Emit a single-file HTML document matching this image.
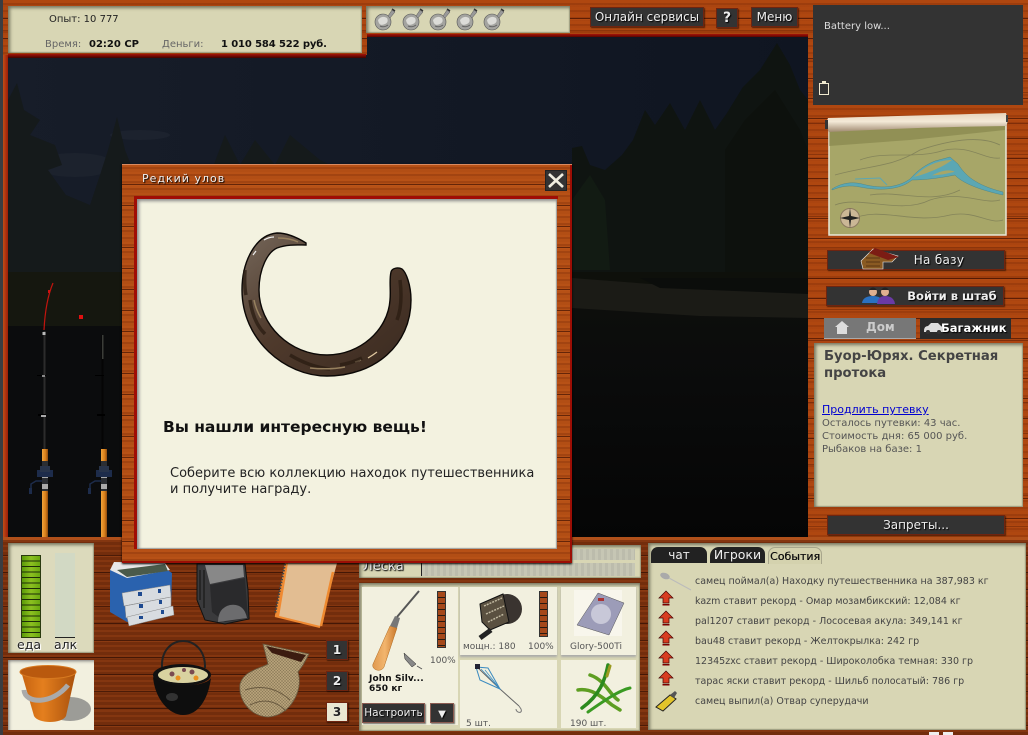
<!DOCTYPE html>
<html><head><meta charset="utf-8"><style>
html,body{margin:0;padding:0;width:1028px;height:735px;overflow:hidden;background:#3a3d42}
body{position:relative;font-family:"DejaVu Sans","Liberation Sans",sans-serif;font-size:10px;color:#222}
div{position:absolute;box-sizing:border-box;white-space:nowrap}
svg{position:absolute;left:0;top:0}
.w{background-color:#a8430f;background-image:repeating-linear-gradient(180deg,rgba(50,10,0,0) 0 18px,rgba(50,10,0,.6) 18px 19px,rgba(255,140,60,.08) 19px 20px),repeating-linear-gradient(180deg,rgba(50,10,0,0) 0 30px,rgba(60,12,0,.3) 30px 31px),repeating-linear-gradient(180deg,rgba(255,120,30,.08) 0 3px,rgba(80,20,0,.12) 3px 5px,rgba(255,120,30,.03) 5px 7px)}
.wd{background-color:#7c320e;background-image:repeating-linear-gradient(180deg,rgba(30,5,0,0) 0 15px,rgba(30,5,0,.55) 15px 16px,rgba(255,130,50,.06) 16px 17px),repeating-linear-gradient(180deg,rgba(255,120,40,.06) 0 2px,rgba(50,10,0,.12) 2px 5px)}
.w2{background-color:#b04c14;background-image:repeating-linear-gradient(180deg,rgba(50,10,0,0) 0 19px,rgba(50,10,0,.6) 19px 20px,rgba(255,140,60,.1) 20px 21px),repeating-linear-gradient(180deg,rgba(255,130,40,.09) 0 2px,rgba(80,20,0,.14) 2px 4px,rgba(255,130,40,.03) 4px 7px)}
.p{background:#d8d6b4;box-shadow:inset 3px 3px 3px -1px #77765f,inset -1px -1px 1px #99987c}
.c{background:#f2f0df}
.b{background:#333;border:1px solid #6e2410;box-shadow:1px 1px 1px rgba(0,0,0,.5);color:#eee;text-align:center;text-shadow:1px 1px 1px #000;font-size:12px}
.t{line-height:12px}
</style></head><body>

<div class="w" style="left:3px;top:0;width:1025px;height:735px"></div>
<div style="left:3px;top:0;width:5px;height:540px;background:linear-gradient(90deg,#c04e18,#9c1c08)"></div>

<!-- scene -->
<svg width="1028" height="735" style="z-index:1">
<defs><linearGradient id="sky" x1="0" y1="0" x2="1" y2="0"><stop offset="0" stop-color="#171d29"/><stop offset="1" stop-color="#0f1521"/></linearGradient>
<linearGradient id="wat" x1="0" y1="0" x2="0" y2="1"><stop offset="0" stop-color="#0e0f0d"/><stop offset=".4" stop-color="#0a0b0b"/><stop offset="1" stop-color="#050505"/></linearGradient>
<linearGradient id="orn" x1="0" y1="0" x2="1" y2="0"><stop offset="0" stop-color="#f2a33a"/><stop offset=".6" stop-color="#d87f1a"/><stop offset="1" stop-color="#8c4a10"/></linearGradient></defs>
<rect x="8" y="37" width="800" height="501" fill="url(#sky)"/>
<ellipse cx="75" cy="165" rx="40" ry="12" fill="#1c222d"/><ellipse cx="140" cy="135" rx="30" ry="5" fill="#1c222e"/>
<rect x="8" y="285" width="800" height="253" fill="url(#wat)"/>
<rect x="8" y="326" width="115" height="212" fill="#0b0c0d"/>
<polygon fill="#151a1b" points="8,100 17,83 24,110 40,120 30,135 55,145 62,165 48,170 66,195 90,205 100,175 108,150 117,117 125,150 135,175 165,200 210,175 225,135 240,165 255,140 275,165 290,135 320,160 340,170 380,200 640,200 640,300 8,300"/>
<polygon fill="#0f1411" points="572,148 582,146 590,165 605,170 622,155 633,140 645,110 655,125 670,103 685,130 700,100 715,130 727,113 743,87 760,70 777,43 790,65 800,90 808,100 808,280 572,280"/>
<polygon fill="#0d110d" points="725,150 745,120 775,90 800,130 808,150 808,280 725,280"/>
<polygon fill="#121b13" points="572,200 590,175 605,200 610,270 572,270"/>
<rect x="8" y="272" width="800" height="12" fill="#0e100b"/>
<polygon fill="#1b1b16" points="572,278 650,284 808,290 808,318 700,316 572,308"/>
<polygon fill="#0b0d0b" points="640,278 808,278 808,294 660,288"/>
<rect x="8" y="272" width="115" height="54" fill="#15170f"/>
<!-- rods -->
<g>
<path d="M44 330 C45 310 48 295 53 283" stroke="#c2140e" stroke-width="1.2" fill="none"/>
<rect x="79" y="315" width="4" height="4" fill="#e01010"/><rect x="48" y="290" width="2" height="3" fill="#d01010"/>
<rect x="43.5" y="331" width="2" height="120" fill="#2c2c2c"/><rect x="42.5" y="332" width="3" height="3" fill="#bbb"/>
<rect x="38" y="414" width="8" height="2" fill="#000"/><rect x="41" y="415" width="5" height="2" fill="#aaa"/>
<rect x="37" y="375" width="9" height="1" fill="#000"/><rect x="42" y="375" width="3" height="2" fill="#888"/>
<rect x="101.500" y="335" width="2" height="116" fill="#050505"/><rect x="102" y="335" width="1.500" height="24" fill="#3b3d38"/>
<rect x="97" y="414" width="8" height="2" fill="#000"/><rect x="95" y="375" width="9" height="1" fill="#000"/>
<rect x="42" y="449" width="6" height="88" fill="url(#orn)"/><rect x="101" y="449" width="6" height="88" fill="url(#orn)"/>
<g id="r1"><rect x="42" y="461" width="6" height="30" fill="#2b2e33"/><rect x="42" y="472" width="6" height="6" fill="#aaa"/><rect x="42" y="484" width="6" height="5" fill="#aaa"/>
<path d="M37 470h16v7h-16z" fill="#1d2c4b"/><path d="M40 466h10v6h-10z" fill="#28344a"/><path d="M42 481h-6l-5 3v8" stroke="#1d2c4b" stroke-width="1.500" fill="none"/><rect x="29" y="488" width="3" height="6" fill="#1d2c4b"/></g>
<g transform="translate(59,0)"><rect x="42" y="461" width="6" height="30" fill="#2b2e33"/><rect x="42" y="472" width="6" height="6" fill="#aaa"/><rect x="42" y="484" width="6" height="5" fill="#aaa"/>
<path d="M37 470h16v7h-16z" fill="#1d2c4b"/><path d="M40 466h10v6h-10z" fill="#28344a"/><path d="M42 481h-6l-5 3v8" stroke="#1d2c4b" stroke-width="1.500" fill="none"/><rect x="29" y="488" width="3" height="6" fill="#1d2c4b"/></g>
</g>
</svg>

<!-- wood edges over scene -->
<div class="w" style="left:362px;top:0;width:446px;height:34px;z-index:2"></div>
<div style="left:362px;top:34px;width:446px;height:3px;background:linear-gradient(#a51208,#5a0500);z-index:2"></div>
<div class="w" style="left:3px;top:0;width:364px;height:55px;z-index:2"></div>
<div style="left:8px;top:54px;width:358px;height:4px;background:linear-gradient(#a51208,#400300);z-index:2"></div>
<div class="w" style="left:808px;top:0;width:220px;height:540px;z-index:2"></div>
<div class="wd" style="left:3px;top:537px;width:1025px;height:198px;z-index:2;border-top:3px solid #b0501a"></div>

<!-- top panels -->
<div class="p" style="left:8px;top:6px;width:354px;height:47px;z-index:3"></div>
<div class="t" style="left:49px;top:14px;z-index:3;color:#222">Опыт: 10 777</div>
<div class="t" style="left:45px;top:39px;z-index:3;color:#666">Время:</div>
<div class="t" style="left:89px;top:39px;z-index:3;font-weight:bold;color:#111">02:20 СР</div>
<div class="t" style="left:162px;top:39px;z-index:3;color:#666">Деньги:</div>
<div class="t" style="left:221px;top:39px;z-index:3;font-weight:bold;color:#111;letter-spacing:-.12px">1 010 584 522 руб.</div>
<div class="p" style="left:366px;top:6px;width:204px;height:27px;z-index:3"></div>
<div class="b" style="left:590px;top:7px;width:114px;height:20px;line-height:18px;z-index:3">Онлайн сервисы</div>
<div class="b" style="left:716px;top:8px;width:22px;height:20px;line-height:18px;font-weight:bold;font-size:14px;z-index:3">?</div>
<div class="b" style="left:751px;top:7px;width:47px;height:20px;line-height:18px;z-index:3">Меню</div>

<!-- battery -->
<div style="left:813px;top:5px;width:210px;height:100px;background:#333;z-index:3"></div>
<div class="t" style="left:824px;top:21px;color:#ddd;z-index:3">Battery low...</div>
<div style="left:819px;top:83px;width:10px;height:12px;border:1px solid #f0ead0;z-index:3"></div>
<div style="left:822px;top:81px;width:4px;height:2px;background:#f0ead0;z-index:3"></div>

<!-- right column buttons -->
<div class="b" style="left:827px;top:250px;width:178px;height:20px;line-height:18px;padding-left:46px;letter-spacing:.3px;z-index:3">На базу</div>
<div class="b" style="left:826px;top:286px;width:178px;height:20px;line-height:18px;padding-left:74px;font-weight:bold;z-index:3;font-size:11.5px">Войти в штаб</div>
<div style="left:824px;top:318px;width:92px;height:21px;background:#777;border-bottom:1px solid #aaa;color:#ccc;font-weight:bold;font-size:12px;line-height:19px;padding-left:42px;z-index:3">Дом</div>
<div style="left:920px;top:318px;width:91px;height:21px;background:#2b2b2b;color:#fff;font-weight:bold;font-size:11.5px;line-height:20px;padding-left:21px;z-index:3;text-shadow:1px 1px 1px #000">Багажник</div>
<div class="p" style="left:814px;top:343px;width:209px;height:164px;z-index:3"></div>
<div style="left:824px;top:348px;font-weight:bold;font-size:13.2px;line-height:17px;color:#444;z-index:3;white-space:normal;width:190px">Буор-Юрях. Секретная протока</div>
<div class="t" style="left:822px;top:404px;font-size:11px;color:#0000d0;text-decoration:underline;z-index:3">Продлить путевку</div>
<div style="left:822px;top:417px;line-height:13px;color:#555;z-index:3">Осталось путевки: 43 час.<br>Стоимость дня: 65 000 руб.<br>Рыбаков на базе: 1</div>
<div class="b" style="left:827px;top:515px;width:178px;height:20px;line-height:18px;z-index:3">Запреты...</div>

<!-- bottom panels -->
<div class="p" style="left:8px;top:543px;width:86px;height:110px;z-index:3;background:#dcdabc"></div>
<div style="left:21px;top:555px;width:20px;height:83px;background:repeating-linear-gradient(180deg,rgba(0,0,0,0) 0 4.700px,#1d2d08 4.700px 5.500px),linear-gradient(90deg,#5a9a08,#8cc020 50%,#6aa810);border:1px solid #2a3a10;z-index:3"></div>
<div style="left:55px;top:553px;width:20px;height:85px;background:#d2d9c4;border-bottom:1px solid #222;z-index:3"></div>
<div style="left:17px;top:638px;font-size:12.500px;line-height:14px;color:#222;text-shadow:0 0 2px #fff,1px 1px 0 #fff;z-index:3">еда</div>
<div style="left:54px;top:638px;font-size:12.500px;line-height:14px;color:#222;text-shadow:0 0 2px #fff,1px 1px 0 #fff;z-index:3">алк</div>
<div class="c" style="left:8px;top:660px;width:86px;height:70px;z-index:3;box-shadow:inset 2px 2px 3px -1px #777"></div>

<div class="b" style="left:326px;top:640px;width:22px;height:20px;line-height:18px;font-weight:bold;z-index:3">1</div>
<div class="b" style="left:326px;top:671px;width:22px;height:20px;line-height:18px;font-weight:bold;z-index:3">2</div>
<div class="b" style="left:326px;top:702px;width:22px;height:20px;line-height:18px;font-weight:bold;background:#e9e7d2;color:#222;text-shadow:0 0 1px #fff;z-index:3">3</div>

<div class="p" style="left:359px;top:545px;width:282px;height:33px;z-index:3"></div>
<div style="left:421px;top:563px;width:214px;height:13px;border-left:1px solid #222;background:repeating-linear-gradient(90deg,#c6c6b4 0 3px,#bcbcac 3px 6px);z-index:3"></div>
<div style="left:421px;top:549px;width:214px;height:11px;background:repeating-linear-gradient(90deg,#c6c6b4 0 3px,#bcbcac 3px 6px);z-index:3"></div>
<div style="left:363px;top:559px;font-size:13px;line-height:15px;color:#eee;text-shadow:1px 1px 1px #000,0 0 2px #000;z-index:3">Леска</div>

<div class="p" style="left:359px;top:583px;width:281px;height:148px;z-index:3"></div>
<div class="c" style="left:362px;top:587px;width:96px;height:138px;z-index:3"></div>
<div class="c" style="left:460px;top:587px;width:97px;height:68px;z-index:3;box-shadow:0 2px 2px #aaa"></div>
<div class="c" style="left:561px;top:587px;width:75px;height:68px;z-index:3;box-shadow:0 2px 2px #aaa"></div>
<div class="c" style="left:460px;top:660px;width:97px;height:68px;z-index:3"></div>
<div class="c" style="left:561px;top:660px;width:75px;height:68px;z-index:3"></div>
<div style="left:437px;top:591px;width:9px;height:57px;background:repeating-linear-gradient(180deg,#a5481a 0 5px,#2a1a10 5px 6px);border:1px solid #333;z-index:4"></div>
<div style="left:539px;top:591px;width:9px;height:46px;background:repeating-linear-gradient(180deg,#a5481a 0 5px,#2a1a10 5px 6px);border:1px solid #333;z-index:4"></div>
<div class="t" style="left:430px;top:655px;font-size:9px;color:#555;z-index:4">100%</div>
<div class="t" style="left:463px;top:641px;font-size:9px;color:#555;z-index:4">мощн.: 180</div>
<div class="t" style="left:528px;top:641px;font-size:9px;color:#555;z-index:4">100%</div>
<div class="t" style="left:570px;top:641px;font-size:9px;color:#555;z-index:4">Glory-500Ti</div>
<div style="left:369px;top:674px;font-size:9px;line-height:10px;font-weight:bold;color:#111;z-index:4;letter-spacing:.1px">John Silv...<br>650 кг</div>
<div class="t" style="left:466px;top:718px;font-size:9px;color:#555;z-index:4">5 шт.</div>
<div class="t" style="left:570px;top:718px;font-size:9px;color:#555;z-index:4">190 шт.</div>
<div class="b" style="left:362px;top:703px;width:63px;height:20px;line-height:18px;font-size:10.500px;border-color:#8a5a50;z-index:4">Настроить</div>
<div class="b" style="left:430px;top:703px;width:24px;height:20px;line-height:18px;border-color:#8a5a50;z-index:4"><span style="font-size:10px">▼</span></div>

<!-- events -->
<div class="p" style="left:648px;top:543px;width:378px;height:187px;z-index:3"></div>
<div style="left:651px;top:547px;width:56px;height:16px;background:#222;border-radius:7px 7px 0 0;color:#eee;font-size:12px;line-height:16px;text-align:center;z-index:4">чат</div>
<div style="left:710px;top:547px;width:55px;height:16px;background:#222;border-radius:9px 7px 0 0;color:#eee;font-size:12.500px;line-height:16px;text-align:center;z-index:4">Игроки</div>
<div style="left:768px;top:547px;width:54px;height:17px;background:#d4d2ae;border:1px solid #a8a68c;border-bottom:0;border-radius:7px 7px 0 0;color:#111;font-size:11px;line-height:17px;text-align:center;z-index:4;text-shadow:.3px 0 0 #111">События</div>
<div style="left:695px;top:572px;font-size:9.500px;line-height:20px;color:#444;z-index:4">самец поймал(а) Находку путешественника на 387,983 кг<br>kazm ставит рекорд - Омар мозамбикский: 12,084 кг<br>pal1207 ставит рекорд - Лососевая акула: 349,141 кг<br>bau48 ставит рекорд - Желтокрылка: 242 гр<br>12345zxc ставит рекорд - Широколобка темная: 330 гр<br>тарас яски ставит рекорд - Шильб полосатый: 786 гр<br>самец выпил(а) Отвар суперудачи</div>
<div style="left:929px;top:732px;width:28px;height:3px;z-index:4;background:repeating-linear-gradient(90deg,#eee 0 10px,transparent 10px 14px)"></div>

<!-- illustrations -->
<svg width="1028" height="735" style="z-index:5">
<defs>
<g id="fl"><circle cx="8" cy="14" r="8" fill="#a4a4a0" stroke="#555" stroke-width=".6"/><path d="M3 12 q4 -5 9 -2 q2 4 -2 6 q-6 3 -7 -4" fill="#dcdcd8"/><path d="M5 18 q4 2 8 -1" stroke="#666" fill="none"/><path d="M13 8 L17 2 L20 4 L15 10z" fill="#999" stroke="#555" stroke-width=".5"/><path d="M17 1l3 2" stroke="#333" stroke-width="1.500"/></g>
<g id="ar"><path d="M7 0 L14 7 H10 V12 H4 V7 H0Z" fill="#d83c20" stroke="#400" stroke-width=".7"/><rect x="3.500" y="13" width="7" height="1.500" fill="#700"/></g>
<pattern id="nt" width="3" height="3" patternUnits="userSpaceOnUse"><rect width="3" height="3" fill="#b5a078"/><path d="M0 0L3 3M3 0L0 3" stroke="#8a7a58" stroke-width=".5"/></pattern>
<linearGradient id="bk" x1="0" y1="0" x2="1" y2="0"><stop offset="0" stop-color="#c56210"/><stop offset=".4" stop-color="#e47f1e"/><stop offset="1" stop-color="#a8500c"/></linearGradient>
<linearGradient id="rl" x1="0" y1="0" x2="0" y2="1"><stop offset="0" stop-color="#e6d4bc"/><stop offset=".45" stop-color="#f4ead8"/><stop offset="1" stop-color="#a08a70"/></linearGradient>
<linearGradient id="hd" x1="0" y1="0" x2="1" y2="0"><stop offset="0" stop-color="#e0994f"/><stop offset=".5" stop-color="#f2b56e"/><stop offset="1" stop-color="#c9772a"/></linearGradient>
</defs>
<!-- flasks -->
<use href="#fl" x="375" y="8"/><use href="#fl" x="403" y="8"/><use href="#fl" x="430" y="8"/><use href="#fl" x="457" y="8"/><use href="#fl" x="484" y="8"/>
<!-- map -->
<polygon points="829,125 1006,123 1006,235 829,235" fill="#a7a668" stroke="#e8e8d8" stroke-width="1.500"/>
<polygon points="829,130 1005,125 1005,130 910,140 829,146" fill="#70703a" opacity=".4"/>
<g fill="none" stroke="#84845a" stroke-width=".8">
<path d="M835 175 C870 165 890 168 920 150 C950 140 980 135 1000 145"/><path d="M835 205 C860 195 900 215 930 200 C960 190 985 205 1000 200"/>
<path d="M850 220 C880 205 910 225 950 215 C975 210 990 225 1003 220"/><path d="M860 160 C885 150 915 160 945 150 C970 145 985 160 1000 158"/><path d="M870 195 C900 190 930 205 960 190"/></g>
<path d="M832 189 C840 184 850 181 862 184 C885 190 900 186 910 179 C918 170 925 165 935 161 L950 157 L958 164 C965 175 975 185 1003 192 L1003 195 C975 189 960 181 955 175 C940 178 925 180 912 180 C900 190 880 191 860 187 C850 185 842 186 832 190Z" fill="#5ba7b4" stroke="#467f84" stroke-width=".4"/>
<path d="M914 177 C925 165 940 160 952 160 C944 166 932 172 914 177Z" fill="#a7a668"/><path d="M930 176 C940 170 950 168 956 172 C948 174 940 176 930 176Z" fill="#a7a668" stroke="#5ba7b4"/>
<path d="M855 179 L880 178 L887 185" stroke="#5ba7b4" stroke-width="1" fill="none"/>
<circle cx="850" cy="218" r="9.500" fill="#cbb796" stroke="#8c7a60"/><path d="M850 208 L851 216 L860 218 L851 220 L850 228 L849 220 L840 218 L849 216Z" fill="#222"/>
<path d="M828 118 Q900 116 1006 113 Q1009 122 1006 126 Q920 127 829 132 Q825 124 828 118Z" fill="url(#rl)"/>
<rect x="825" y="120" width="3" height="9" fill="#333"/><rect x="1006" y="115" width="2" height="7" fill="#444"/>
<!-- house -->
<path d="M861 261 L873 249 L898 256 L892 262 L883 262 L883 269 L863 269Z" fill="#8a5a22" stroke="#eee" stroke-width=".6"/><path d="M869 253 L875 248 L899 257 L888 260Z" fill="#7c1c14"/><path d="M866 258 h14 M866 262 h14 M866 266 h14" stroke="#4a2a10" stroke-width=".7"/>
<!-- people -->
<circle cx="873" cy="292" r="4" fill="#e0b090"/><path d="M869 290 q4 -5 8 0" fill="#222"/><path d="M862 303 q1 -7 11 -7 q9 0 10 7z" fill="#2b71c0"/><circle cx="885" cy="292" r="4" fill="#e0b090"/><path d="M881 290 q4 -5 8 0" fill="#222"/><path d="M877 304 q1 -8 8 -8 q9 0 10 8z" fill="#6a3aa5"/>
<!-- house/car icons -->
<path d="M835 327 L842 321 L849 327 H847 V334 H837 V327Z" fill="#ddd"/>
<path d="M924 331 q0 -5 4 -5 l3 -3 h7 l3 3 q2 1 2 4 v2 h-19z" fill="#ddd"/><circle cx="928" cy="332" r="2" fill="#333"/><circle cx="939" cy="332" r="2" fill="#333"/>
<!-- tackle box -->
<polygon points="110,570 116,563 160,565 172,573 171,610 127,622 110,612" fill="#2a62ae"/><polygon points="110,570 114,562 165,563 170,570 127,578" fill="#e8e8e8"/><polygon points="117,570 165,564 168,571 127,577" fill="#4a5a4a"/>
<g fill="#d8dce0" stroke="#888" stroke-width=".5"><polygon points="122,593 170,585 171,597 124,606"/><polygon points="125,606 171,597 171,607 126,618"/><polygon points="127,617 173,606 174,615 129,626"/></g>
<g fill="#1e4a90"><rect x="138" y="592" width="4" height="4"/><rect x="158" y="589" width="3" height="4"/><rect x="139" y="604" width="4" height="4"/><rect x="159" y="600" width="3" height="4"/><rect x="139" y="616" width="4" height="3"/><rect x="161" y="610" width="3" height="4"/></g>
<!-- backpack -->
<path d="M197 564 H245 L248 590 L249 619 L225 624 L205 620 L197 600Z" fill="#3a3a3c" stroke="#111"/><path d="M205 565 H243 L244 577 L210 584Z" fill="#888"/><path d="M210 585 L245 578 L248 618 L225 622 L212 612Z" fill="#2a2a2c"/><path d="M218 622 q0 -14 12 -17 q14 -2 17 13z" fill="#6c6c6e"/><path d="M200 570 v30 M204 570 v38" stroke="#111" stroke-width="1"/>
<!-- notebook -->
<polygon points="285,563 337,563 320,627 275,616" fill="#e2bd92"/><polygon points="285,563 288,563 279,617 275,616" fill="#f08a32"/><path d="M285 564 L275 614" stroke="#444" stroke-width="2.200" stroke-dasharray="1.500 1.500"/><path d="M333 572 L321 626" stroke="#ee8a30" stroke-width="2.500"/><path d="M275 616 L320 627" stroke="#f08a32" stroke-width="2"/>
<!-- pot -->
<path d="M162 668 C160 632 206 632 205 668" fill="none" stroke="#222" stroke-width="2"/>
<ellipse cx="182" cy="675" rx="29" ry="11" fill="#111"/><ellipse cx="183" cy="675" rx="25" ry="8" fill="#d9d2a0"/><circle cx="172" cy="674" r="2.500" fill="#7a4a50"/><circle cx="192" cy="672" r="2.500" fill="#7a4a50"/><circle cx="178" cy="678" r="2.500" fill="#e89020"/><circle cx="196" cy="678" r="2.500" fill="#e89020"/><circle cx="184" cy="670" r="2" fill="#7a4a50"/>
<path d="M153 677 C155 700 170 715 183 715 C198 715 208 700 211 678 C205 688 165 688 153 677Z" fill="#0e0e0e"/><ellipse cx="172" cy="697" rx="6" ry="4" fill="#555" opacity=".5"/>
<!-- net -->
<path d="M263 644 L309 654 L303 665 L298 672 C304 690 290 716 268 717 C250 716 238 700 240 684 C244 670 262 668 268 664Z" fill="url(#nt)" stroke="#6a5a40" stroke-width=".8"/><path d="M266 646 L306 655 L301 662 L272 653Z" fill="#3c1c10"/><path d="M245 690 q25 -8 45 10 M250 705 q20 -10 36 6" stroke="#6a5a40" fill="none"/>
<!-- bucket -->
<ellipse cx="70" cy="709" rx="21" ry="12" fill="#777" opacity=".7"/>
<path d="M21 671 C24 665 72 665 76 671 L66 716 C62 724 38 724 34 716Z" fill="url(#bk)"/><ellipse cx="48" cy="672" rx="28" ry="6.500" fill="#b9590e" stroke="#d87a20"/><path d="M24 690 C25 704 52 705 68 685" stroke="#aaa" stroke-width="5" fill="none"/>
<!-- rod item -->
<path d="M373 664 C371 670 381 673 384 667 L397 628 L390 626Z" fill="url(#hd)" stroke="#b06a20" stroke-width=".5"/><path d="M390 626 L397 628 L400 618 L395 616Z" fill="#777"/><path d="M397 617 L419 591" stroke="#555" stroke-width="2"/>
<path d="M404 653 L416 664 L412 667 L405 659Z" fill="#888" stroke="#222" stroke-width=".5"/><path d="M417 666 l5 3" stroke="#555"/>
<!-- reel -->
<circle cx="507" cy="609" r="15" fill="#3a3430"/><path d="M480 604 L503 594 L509 622 L490 630 L482 622Z" fill="#5a5040" stroke="#111"/><path d="M484 606 l18 -8 M486 614 l18 -8 M488 622 l16 -8" stroke="#c0b8a0" stroke-width="1.500" stroke-dasharray="2 1"/><path d="M491 630 L480 638" stroke="#222" stroke-width="5"/>
<!-- line pack -->
<rect x="574" y="590" width="48" height="46" fill="#f8f6ec"/><polygon points="577,625 598,593 624,603 609,635" fill="#9c9cb8" stroke="#555" stroke-width=".5"/><circle cx="601" cy="614" r="10" fill="#c8c8d8"/><rect x="598" y="598" width="6" height="3" fill="#a33"/>
<!-- feeder -->
<path d="M476 666 L500 689 M500 689 L519 706" stroke="#666"/><path d="M476 667 L488 668 L500 689 L480 680Z" fill="none" stroke="#3a8ac0" stroke-width="1"/><path d="M481 669 L500 689 M485 670 L500 689" stroke="#3a8ac0" stroke-width=".7"/><rect x="475" y="664" width="5" height="5" fill="#223"/><path d="M519 706 L521 709 C523 714 516 713 516 709" fill="none" stroke="#777"/>
<!-- bait -->
<g fill="none" stroke-linecap="round"><path d="M578 690 C590 688 600 695 612 705 L620 710" stroke="#5e9e22" stroke-width="3.500"/><path d="M590 675 C605 680 610 695 618 700" stroke="#5e9e22" stroke-width="3.500"/><path d="M608 665 C605 680 600 695 582 708" stroke="#2c8a1e" stroke-width="3.500"/><path d="M588 712 C605 700 620 690 630 688" stroke="#3a9a22" stroke-width="3"/><path d="M610 666 l-3 10" stroke="#9a9a20" stroke-width="3"/></g>
<!-- events icons -->
<ellipse cx="665" cy="576" rx="5" ry="3" fill="#aaa" transform="rotate(20 665 576)"/><path d="M669 578 L691 590" stroke="#bbb"/>
<use href="#ar" x="659" y="591"/><use href="#ar" x="659" y="611"/><use href="#ar" x="659" y="631"/><use href="#ar" x="659" y="651"/><use href="#ar" x="659" y="671"/>
<path d="M656 707 L670 695 L676 699 L663 711Z" fill="#e2c42a" stroke="#222"/><path d="M670 695 L675 691 L677 693 L674 698Z" fill="#555"/>
</svg>

<!-- dialog -->
<div class="w2" style="left:122px;top:164px;width:450px;height:399px;z-index:6;border-top:1px solid #d98a60;box-shadow:inset -2px -2px 0 #9c0e05,0 1px 2px #000"></div>
<div style="left:134px;top:196px;width:424px;height:3px;background:#a00d05;z-index:6"></div>
<div style="left:134px;top:196px;width:4px;height:353px;background:#a00d05;z-index:6"></div>
<div style="left:137px;top:199px;width:420px;height:350px;background:#f3f2e0;box-shadow:inset 3px 3px 3px -1px #888,inset -1px -1px 1px #999;z-index:6"></div>
<div style="left:142px;top:172px;font-size:11px;line-height:13px;letter-spacing:1px;color:#eee;text-shadow:1px 1px 1px #000;z-index:7">Редкий улов</div>
<div style="left:545px;top:170px;width:22px;height:21px;background:#333;border:1px solid #222;z-index:7"><svg width="20" height="19"><path d="M3 3 L17 16 M17 3 L3 16" stroke="#f0eee0" stroke-width="2.600"/></svg></div>
<svg width="1028" height="735" style="z-index:7">
<defs><linearGradient id="rg" x1="0" y1="0" x2="1" y2="1"><stop offset="0" stop-color="#75675a"/><stop offset=".45" stop-color="#4f3a2c"/><stop offset="1" stop-color="#3a2a20"/></linearGradient></defs>
<path d="M306 243 C298 238 288 233 277 233 C255 235 242 262 242 290 C242 340 285 376 327 376 C375 376 411 345 411 300 C411 285 406 272 402 269 C398 267 392 268 391 272 C389 280 391 290 390 300 C388 330 360 355 327 355 C290 355 259 325 259 290 C259 268 268 252 277 248 C288 244 298 245 306 245 Z" fill="url(#rg)" stroke="#0b0806" stroke-width="1.400"/>
<path d="M264 240 q5 -3 10 -3 M253 255 l3 -4" stroke="#eee" stroke-width="1.200" fill="none"/><path d="M368 358 q5 -3 9 -6 M355 362 l6 -2" stroke="#e0c8a0" stroke-width="1.300" fill="none"/><path d="M290 355 q20 12 40 14 M250 300 q3 22 15 34 M340 365 q12 -2 22 -7 M400 280 q3 25 -3 40 M245 270 q-1 15 1 25" stroke="#2a1c12" stroke-width="3.500" fill="none" opacity=".75"/><path d="M278 238 q12 0 20 4 M310 368 q20 2 35 -1 M254 300 q2 10 7 18" stroke="#96805e" stroke-width="1.500" fill="none"/>
</svg>
<div style="left:163px;top:418px;font-size:15.500px;line-height:18px;font-weight:bold;color:#111;z-index:7">Вы нашли интересную вещь!</div>
<div style="left:170px;top:466px;font-size:13px;line-height:16px;color:#222;z-index:7">Соберите всю коллекцию находок путешественника<br>и получите награду.</div>
</body></html>
